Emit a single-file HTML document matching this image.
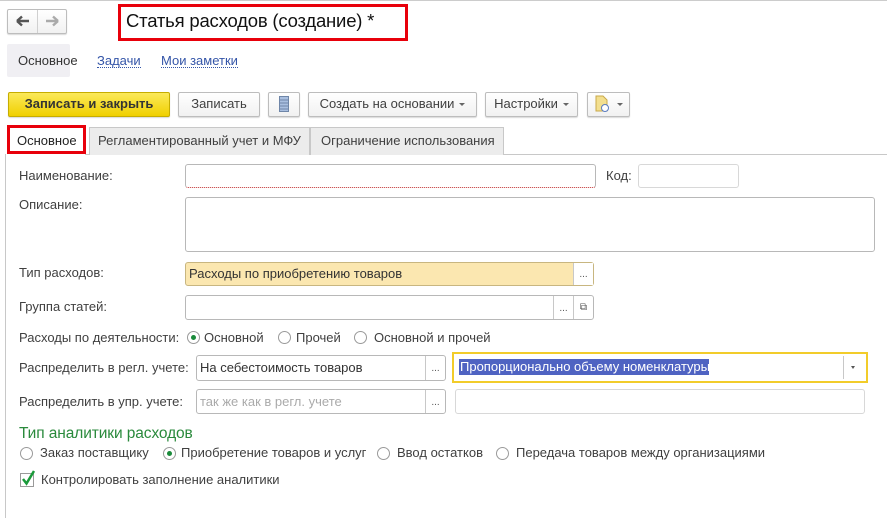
<!DOCTYPE html>
<html><head><meta charset="utf-8"><style>
*{box-sizing:border-box;margin:0;padding:0}
body{width:887px;height:518px;background:#fff;position:relative;overflow:hidden;font-family:"Liberation Sans",Arial,sans-serif;font-size:13px;color:#404040}
.a{position:absolute}
.t{position:absolute;white-space:nowrap;line-height:14px;letter-spacing:0}
.btn{position:absolute;border:1px solid #bdbdbd;border-radius:2px;background:linear-gradient(#fff,#f1f1f1);box-shadow:0 1px 1px rgba(0,0,0,.15);text-align:center;line-height:22px;color:#404040;white-space:nowrap}
.inp{position:absolute;border:1px solid #b8b8b8;border-radius:3px;background:#fff}
.dots{position:absolute;top:0;bottom:0;border-left:1px solid #c8c8c8;text-align:center;font-size:10px;line-height:26px;color:#555}
.rad{position:absolute;width:13px;height:13px;border:1px solid #9a9a9a;border-radius:50%;background:#fff}
.rad.on:after{content:"";position:absolute;left:3px;top:3px;width:5px;height:5px;border-radius:50%;background:#1a8a3a}
.arr{display:inline-block;width:0;height:0;border-left:3px solid transparent;border-right:3px solid transparent;border-top:3px solid #666;vertical-align:middle;margin-left:5px}
</style></head><body>
<div class="a" style="left:0;top:0;width:887px;height:1px;background:#ccc"></div>
<div class="btn" style="left:7px;top:9px;width:60px;height:25px;padding:0"></div>
<div class="a" style="left:37px;top:10px;width:1px;height:23px;background:#d0d0d0"></div>
<svg class="a" style="left:15px;top:14px" width="46" height="14"><path d="M2 7h12M2 7l5-4.5M2 7l5 4.5" stroke="#555" stroke-width="2.4" fill="none"/><path d="M31 7h12M43 7l-5-4.5M43 7l-5 4.5" stroke="#aaa" stroke-width="2.4" fill="none"/></svg>
<div class="a" style="left:118px;top:4px;width:290px;height:37px;border:3px solid #e8000b"></div>
<div class="t" style="left:126px;top:11px;font-size:18.5px;line-height:20px;color:#111;letter-spacing:-0.2px">Статья расходов (создание) *</div>
<div class="a" style="left:7px;top:44px;width:63px;height:33px;background:#f0eff3;border-radius:2px"></div>
<div class="t" style="left:18px;top:54px;color:#333">Основное</div>
<div class="t" style="left:97px;top:54px;color:#3455a8;border-bottom:1px dotted #3455a8;line-height:13px">Задачи</div>
<div class="t" style="left:161px;top:54px;color:#3455a8;border-bottom:1px dotted #3455a8;line-height:13px">Мои заметки</div>
<div class="btn" style="left:8px;top:92px;width:162px;height:25px;background:linear-gradient(#fbe95a,#f0d000);border-color:#c6ad00;font-weight:bold;color:#333;font-size:13px">Записать и закрыть</div>
<div class="btn" style="left:178px;top:92px;width:82px;height:25px">Записать</div>
<div class="btn" style="left:268px;top:92px;width:32px;height:25px"></div>
<svg class="a" style="left:279px;top:96px" width="10" height="16"><rect x="0.5" y="0.5" width="9" height="15" fill="#a9bfe0" stroke="#6f86a8"/><path d="M1 4h8M1 7h8M1 10h8M1 13h8" stroke="#6f86a8"/></svg>
<div class="btn" style="left:308px;top:92px;width:169px;height:25px">Создать на основании<span class="arr"></span></div>
<div class="btn" style="left:485px;top:92px;width:93px;height:25px">Настройки<span class="arr"></span></div>
<div class="btn" style="left:587px;top:92px;width:43px;height:25px"></div>
<svg class="a" style="left:595px;top:95px" width="30" height="18"><path d="M1 1h7l4 4v11H1z" fill="#f3df8f" stroke="#c9a94a"/><circle cx="10" cy="13" r="3.5" fill="#fff" stroke="#5a7cc0"/><path d="M22 8l3 3 3-3z" fill="#666"/></svg>
<div class="a" style="left:85px;top:154px;width:802px;height:1px;background:#c8c8c8"></div>
<div class="a" style="left:5px;top:154px;width:1px;height:364px;background:#c8c8c8"></div>
<div class="a" style="left:89px;top:127px;width:221px;height:28px;background:#ececec;border:1px solid #c8c8c8;border-bottom:none"></div>
<div class="t" style="left:98px;top:134px;color:#404040">Регламентированный учет и МФУ</div>
<div class="a" style="left:310px;top:127px;width:194px;height:28px;background:#ececec;border:1px solid #c8c8c8;border-bottom:none"></div>
<div class="t" style="left:321px;top:134px;color:#404040">Ограничение использования</div>
<div class="a" style="left:7px;top:125px;width:79px;height:29px;border:3px solid #e8000b;background:#fff"></div>
<div class="t" style="left:17px;top:134px;color:#222">Основное</div>
<div class="t" style="left:19px;top:169px">Наименование:</div>
<div class="inp" style="left:185px;top:164px;width:411px;height:24px;border-bottom:1px dotted #c03030"></div>
<div class="t" style="left:606px;top:169px">Код:</div>
<div class="inp" style="left:638px;top:164px;width:101px;height:24px;border-color:#d8d8d8"></div>
<div class="t" style="left:19px;top:198px">Описание:</div>
<div class="inp" style="left:185px;top:197px;width:690px;height:55px"></div>
<div class="t" style="left:19px;top:266px">Тип расходов:</div>
<div class="inp" style="left:185px;top:262px;width:409px;height:24px;background:#fbe7b0;border-color:#c8b680"><div class="t" style="left:3px;top:4px;color:#333">Расходы по приобретению товаров</div><div class="dots" style="left:387px;width:20px;background:#fff;line-height:24px">...</div></div>
<div class="t" style="left:19px;top:300px">Группа статей:</div>
<div class="inp" style="left:185px;top:295px;width:409px;height:25px"><div class="dots" style="left:367px;width:20px;line-height:25px">...</div><div class="dots" style="left:387px;width:20px;line-height:23px">⧉</div></div>
<div class="t" style="left:19px;top:331px">Расходы по деятельности:</div>
<div class="rad on" style="left:187px;top:331px"></div><div class="t" style="left:204px;top:331px">Основной</div>
<div class="rad" style="left:278px;top:331px"></div><div class="t" style="left:296px;top:331px">Прочей</div>
<div class="rad" style="left:354px;top:331px"></div><div class="t" style="left:374px;top:331px">Основной и прочей</div>
<div class="t" style="left:19px;top:361px">Распределить в регл. учете:</div>
<div class="inp" style="left:196px;top:355px;width:250px;height:26px"><div class="t" style="left:3px;top:5px;color:#333">На себестоимость товаров</div><div class="dots" style="left:228px;width:20px">...</div></div>
<div class="a" style="left:452px;top:352px;width:416px;height:31px;border:2px solid #f2cc2a"></div>
<div class="a" style="left:459px;top:359px;width:250px;height:16px;background:#4f63c2"></div>
<div class="t" style="left:460px;top:360px;color:#fff">Пропорционально объему номенклатуры</div>
<div class="a" style="left:843px;top:356px;width:1px;height:23px;background:#c8c8c8"></div>
<div class="a" style="left:851px;top:366px;border-left:2.5px solid transparent;border-right:2.5px solid transparent;border-top:3px solid #555"></div>
<div class="t" style="left:19px;top:395px">Распределить в упр. учете:</div>
<div class="inp" style="left:196px;top:389px;width:250px;height:25px"><div class="t" style="left:3px;top:5px;color:#aaa">так же как в регл. учете</div><div class="dots" style="left:228px;width:20px;line-height:25px">...</div></div>
<div class="inp" style="left:455px;top:389px;width:410px;height:25px;border-color:#d8d8d8"></div>
<div class="t" style="left:19px;top:425px;font-size:15.5px;line-height:17px;color:#2a8a3c;letter-spacing:-0.1px">Тип аналитики расходов</div>
<div class="rad" style="left:20px;top:447px"></div><div class="t" style="left:40px;top:446px">Заказ поставщику</div>
<div class="rad on" style="left:163px;top:447px"></div><div class="t" style="left:181px;top:446px">Приобретение товаров и услуг</div>
<div class="rad" style="left:377px;top:447px"></div><div class="t" style="left:397px;top:446px">Ввод остатков</div>
<div class="rad" style="left:496px;top:447px"></div><div class="t" style="left:516px;top:446px">Передача товаров между организациями</div>
<div class="a" style="left:20px;top:473px;width:14px;height:14px;border:1px solid #9a9a9a;background:#fff"></div>
<svg class="a" style="left:20px;top:469px" width="16" height="18"><path d="M3 10l3.5 4.5L14 2" stroke="#1a9a3a" stroke-width="2.5" fill="none"/></svg>
<div class="t" style="left:41px;top:473px">Контролировать заполнение аналитики</div>
</body></html>
